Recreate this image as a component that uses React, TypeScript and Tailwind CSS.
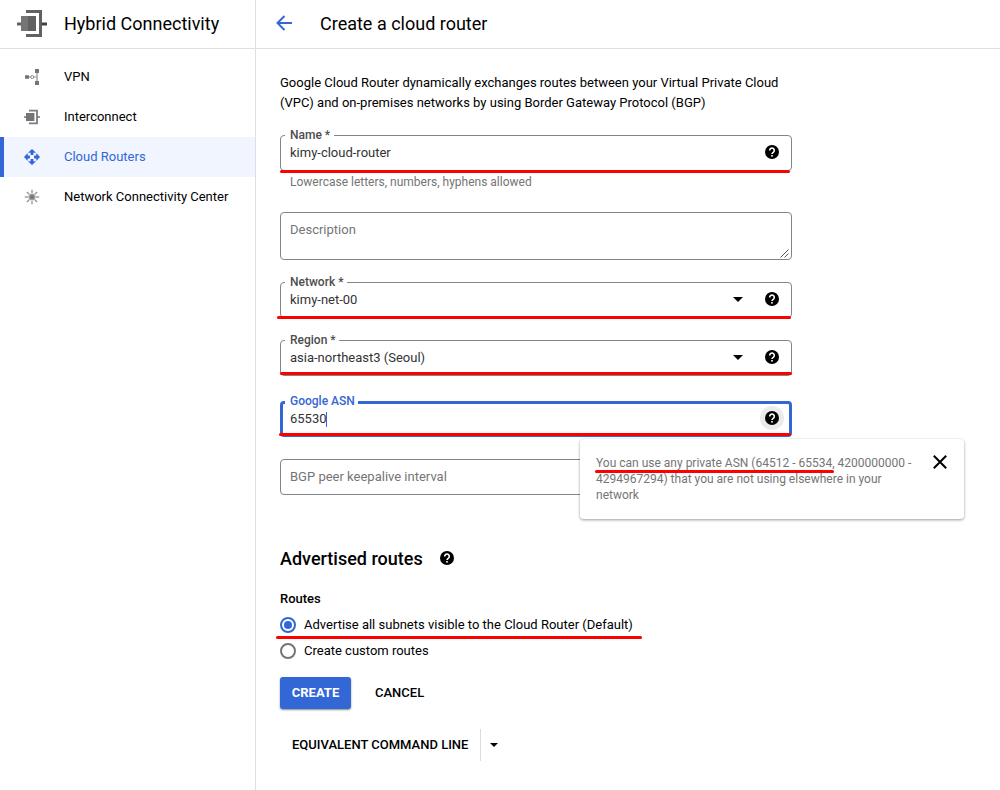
import type { ReactNode } from "react";

function Help({ className = "" }: { className?: string }) {
  return (
    <svg viewBox="0 0 14 14" className={`h-3.5 w-3.5 shrink-0 ${className}`}>
      <circle cx="7" cy="7" r="7" fill="#000" />
      <path d="M4.7 5.5A2.3 2.3 0 1 1 8.5 7.1C7.7 7.7 7 8 7 9.1" fill="none" stroke="#fff" strokeWidth="1.6" />
      <rect x="6.2" y="10" width="1.6" height="1.6" fill="#fff" />
    </svg>
  );
}

function Caret({ className = "" }: { className?: string }) {
  return (
    <svg viewBox="0 0 10 5" className={`shrink-0 ${className}`}>
      <path d="M0 0h10L5 5z" fill="#000" />
    </svg>
  );
}

function InterconnectIcon({ className }: { className: string }) {
  return (
    <svg viewBox="0 0 30 28" className={className}>
      <path d="M0 12.5h5v3H0z" fill="#616161" />
      <path d="M25 12.5h5v3h-5z" fill="#424242" />
      <path d="M4 6h8v15H4z" fill="#757575" />
      <path d="M11 6h8v15h-8z" fill="#616161" />
      <path d="M9 0h16v27H9v-3h13V3H9z" fill="#616161" />
    </svg>
  );
}

function InterconnectSmallIcon() {
  return (
    <svg viewBox="0 0 16 16" className="h-4 w-4">
      <path d="M0 7.2h3v1.6H0zM13 7.2h3v1.6h-3z" fill="#757575" />
      <path d="M2 4h8.4v8H2z" fill="#757575" />
      <path d="M5 1.6h8v12.8H5" fill="none" stroke="#7d7d7d" strokeWidth="1.8" />
    </svg>
  );
}

function VpnIcon() {
  return (
    <svg viewBox="0 0 16 16" className="h-4 w-4">
      <path d="M4 8h8M13 2v12" stroke="#8c8c8c" strokeWidth="1.2" />
      <path d="M1 6.2h4v3.6H1zM11 0h4v4h-4zM11 12h4v4h-4z" fill="#757575" />
      <circle cx="8.2" cy="8" r="1.5" fill="#fff" stroke="#8c8c8c" />
    </svg>
  );
}

function RouterIcon() {
  return (
    <svg viewBox="0 0 16 16" className="h-4 w-4" fill="#3367d6">
      {[0, 90, 180, 270].map((a) => (
        <path key={a} transform={`rotate(${a} 8 8)`} d="M8 0l4 3.7H9.4v2.2H6.6V3.7H4z" />
      ))}
    </svg>
  );
}

function HubIcon() {
  return (
    <svg viewBox="0 0 16 16" className="h-4 w-4">
      {[0, 45, 90, 135, 180, 225, 270, 315].map((a) => (
        <path key={a} transform={`rotate(${a} 8 8)`} d="M8 4.5V.8" stroke="#959595" strokeWidth="1.4" />
      ))}
      <circle cx="8" cy="8" r="4.2" fill="#fff" />
      <circle cx="8" cy="8" r="3.6" fill="#9e9e9e" />
      <circle cx="8" cy="8" r="2" fill="#757575" />
    </svg>
  );
}

function NavItem({ icon, label, active }: { icon: ReactNode; label: string; active?: boolean }) {
  return (
    <li
      className={
        active
          ? "flex h-10 items-center border-l-4 border-[#3367d6] bg-[#f0f5ff] pl-5 text-[#3367d6]"
          : "flex h-10 items-center pl-6 text-[#000]"
      }
    >
      <span className="flex w-10 items-center">{icon}</span>
      {label}
    </li>
  );
}

function Field({
  label,
  value,
  caret,
  focused,
  className,
  children,
}: {
  label: string;
  value: string;
  caret?: boolean;
  focused?: boolean;
  className: string;
  children?: ReactNode;
}) {
  return (
    <div
      className={`relative flex h-9 w-[512px] items-center rounded text-[#333] ${
        focused ? "border-3 border-[#3367d6] pl-[7px] pr-[9px]" : "border border-[#80868b] pl-[9px] pr-3"
      } ${className}`}
    >
      <span
        className={`absolute h-4 bg-white pr-[3.5px] pl-[5px] text-xs leading-4 font-medium whitespace-nowrap ${
          focused ? "-top-[11px] left-[2px] text-[#3367d6]" : "-top-[9px] left-1 text-[#4d4d4d]"
        }`}
      >
        {label}
      </span>
      <span className="leading-4">{value}</span>
      {focused && <span className="-ml-px h-[15px] w-px bg-[#3367d6]" />}
      {caret && <Caret className="mb-px ml-auto h-[5px] w-2.5" />}
      {focused ? (
        <span className="-mr-1 mb-[2px] ml-auto flex h-6 w-6 items-center justify-center rounded-full bg-[#ebebeb]">
          <Help />
        </span>
      ) : (
        <Help className={caret ? "mb-[2px] ml-[22px]" : "mb-[2px] ml-auto"} />
      )}
      {children}
    </div>
  );
}

function Mark({ className }: { className: string }) {
  return <span className={`absolute z-10 h-[3px] rounded-full bg-[#fe0000] ${className}`} />;
}

export default function App() {
  return (
    <div className="flex h-[790px] w-[1000px] overflow-hidden bg-white font-['Roboto',sans-serif] text-[13px] text-[#000]">
      <aside className="w-64 shrink-0 border-r border-[#dfdfdf]">
        <header className="flex h-[49px] items-center border-b border-[#dfdfdf] pl-[17px] text-lg">
          <InterconnectIcon className="mr-[17px] h-7 w-[30px]" />
          <h2 className="leading-6">Hybrid Connectivity</h2>
        </header>
        <ul className="pt-2">
          <NavItem icon={<VpnIcon />} label="VPN" />
          <NavItem icon={<InterconnectSmallIcon />} label="Interconnect" />
          <NavItem icon={<RouterIcon />} label="Cloud Routers" active />
          <NavItem icon={<HubIcon />} label="Network Connectivity Center" />
        </ul>
      </aside>

      <main className="min-w-0 flex-1">
        <header className="flex h-[49px] items-center border-b border-[#dfdfdf] pl-5 text-lg">
          <svg viewBox="0 0 16 16" className="mr-7 mb-[2px] h-4 w-4">
            <path d="M16 8H1.5M8.5 1L1.5 8l7 7" fill="none" stroke="#3367d6" strokeWidth="2" />
          </svg>
          <h1 className="leading-6">Create a cloud router</h1>
        </header>

        <div className="flex flex-col items-start pt-6 pl-6">
          <p className="leading-5">
            Google Cloud Router dynamically exchanges routes between your Virtual Private Cloud
            <br />
            (VPC) and on-premises networks by using Border Gateway Protocol (BGP)
          </p>

          <Field label="Name *" value="kimy-cloud-router" className="mt-[22px]">
            <Mark className="-left-px top-[33.5px] w-[510px]" />
          </Field>
          <p className="mt-[3px] pl-2.5 text-xs leading-4 text-[#757575]">Lowercase letters, numbers, hyphens allowed</p>

          <div className="relative mt-[22px] h-12 w-[512px] rounded border border-[#80868b] pt-[9px] pl-[9px] leading-4 text-[#757575]">
            Description
            <svg viewBox="0 0 9 9" className="absolute right-[2px] bottom-px h-[9px] w-[9px]">
              <path d="M.5 8.5l8-8M4.5 8.5l4-4" stroke="#555" strokeWidth="1" />
            </svg>
          </div>

          <Field label="Network *" value="kimy-net-00" caret className="mt-[22px]">
            <Mark className="-left-1 top-[32.5px] w-[514px]" />
          </Field>
          <Field label="Region *" value="asia-northeast3 (Seoul)" caret className="mt-[22px]">
            <Mark className="-left-px top-[30.5px] w-[512px]" />
          </Field>
          <Field label="Google ASN" value="65530" focused className="mt-[25px]">
            <Mark className="-left-1 top-[29px] w-[512px]" />
            <div className="absolute top-[35px] left-[297px] z-20 flex h-20 w-[384px] items-start rounded bg-white pt-4 pl-4 shadow-[0_1px_3px_rgba(0,0,0,0.4)]">
              <p className="w-[320px] text-xs leading-4 text-[#757575]">
                You can use any private ASN (64512 - 65534, 4200000000 -<br />
                4294967294) that you are not using elsewhere in your
                <br />
                network
              </p>
              <svg viewBox="0 0 14 14" className="ml-[17px] h-3.5 w-3.5">
                <path d="M.8.8l12.4 12.4M13.2.8L.8 13.2" stroke="#000" strokeWidth="2" />
              </svg>
              <Mark className="top-[31px] left-[15px] w-[239px]" />
            </div>
          </Field>
          <div className="mt-[22px] h-9 w-[512px] rounded border border-[#80868b] pl-[9px] leading-[34px] text-[#757575]">
            BGP peer keepalive interval
          </div>

          <div className="mt-[52px] flex h-6 items-center">
            <h2 className="text-lg leading-6 font-medium">Advertised routes</h2>
            <Help className="mb-[2px] ml-[17px]" />
          </div>

          <h3 className="mt-[18px] leading-5 font-medium">Routes</h3>
          <div className="relative mt-[6px] flex h-5 items-center">
            <span className="mr-2 flex h-4 w-4 items-center justify-center rounded-full border-2 border-[#3367d6]">
              <span className="h-2 w-2 rounded-full bg-[#3367d6]" />
            </span>
            Advertise all subnets visible to the Cloud Router (Default)
            <Mark className="top-[21px] -left-1 w-[366px]" />
          </div>
          <div className="mt-[6px] flex h-5 items-center">
            <span className="mr-2 h-4 w-4 rounded-full border-2 border-[#757575]" />
            Create custom routes
          </div>

          <div className="mt-4 flex h-8 items-center font-medium">
            <button className="h-8 w-[71px] rounded-[3px] bg-[#3367d6] font-bold text-white shadow-[0_1px_2px_rgba(0,0,0,0.45)]">
              CREATE
            </button>
            <button className="ml-6">CANCEL</button>
          </div>

          <div className="mt-5 flex h-8 items-center font-medium">
            <button className="w-[200px] pl-3 text-left whitespace-nowrap">EQUIVALENT COMMAND LINE</button>
            <span className="h-8 w-px bg-[#dadce0]" />
            <Caret className="ml-[9px] h-1 w-2" />
          </div>
        </div>
      </main>
    </div>
  );
}
